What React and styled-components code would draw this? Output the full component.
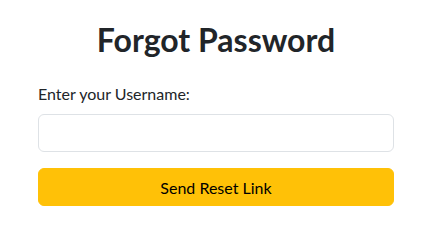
import styled, { createGlobalStyle } from 'styled-components';

const GlobalStyle = createGlobalStyle`
  * { box-sizing: border-box; }
  body {
    margin: 0;
    background: #fff;
    color: #212529;
    font-family: Lato, 'Noto Sans', sans-serif;
  }
`;

const Page = styled.div`
  width: 356px;
  margin-left: 38px;
  padding-top: 21px;
`;

const Title = styled.h2`
  margin: 0 0 23px;
  font-size: 32px;
  line-height: 1.2;
  font-weight: 700;
  text-align: center;
  color: #212529;
`;

const Form = styled.form`
  display: flex;
  flex-direction: column;
`;

const Label = styled.label`
  font-size: 16px;
  line-height: 24px;
  margin-bottom: 8px;
`;

const Input = styled.input`
  height: 38px;
  padding: 6px 12px;
  font: inherit;
  border: 1px solid #dee2e6;
  border-radius: 6px;
  outline: none;
`;

const Button = styled.button`
  margin-top: 16px;
  height: 38px;
  border: 1px solid #ffc107;
  border-radius: 6px;
  background: #ffc107;
  color: #000;
  font: inherit;
  font-size: 16px;
  cursor: pointer;
`;

export default function App() {
  return (
    <>
      <GlobalStyle />
      <Page>
        <Title>Forgot Password</Title>
        <Form onSubmit={(e) => e.preventDefault()}>
          <Label htmlFor="username">Enter your Username:</Label>
          <Input id="username" type="text" />
          <Button type="submit">Send Reset Link</Button>
        </Form>
      </Page>
    </>
  );
}
